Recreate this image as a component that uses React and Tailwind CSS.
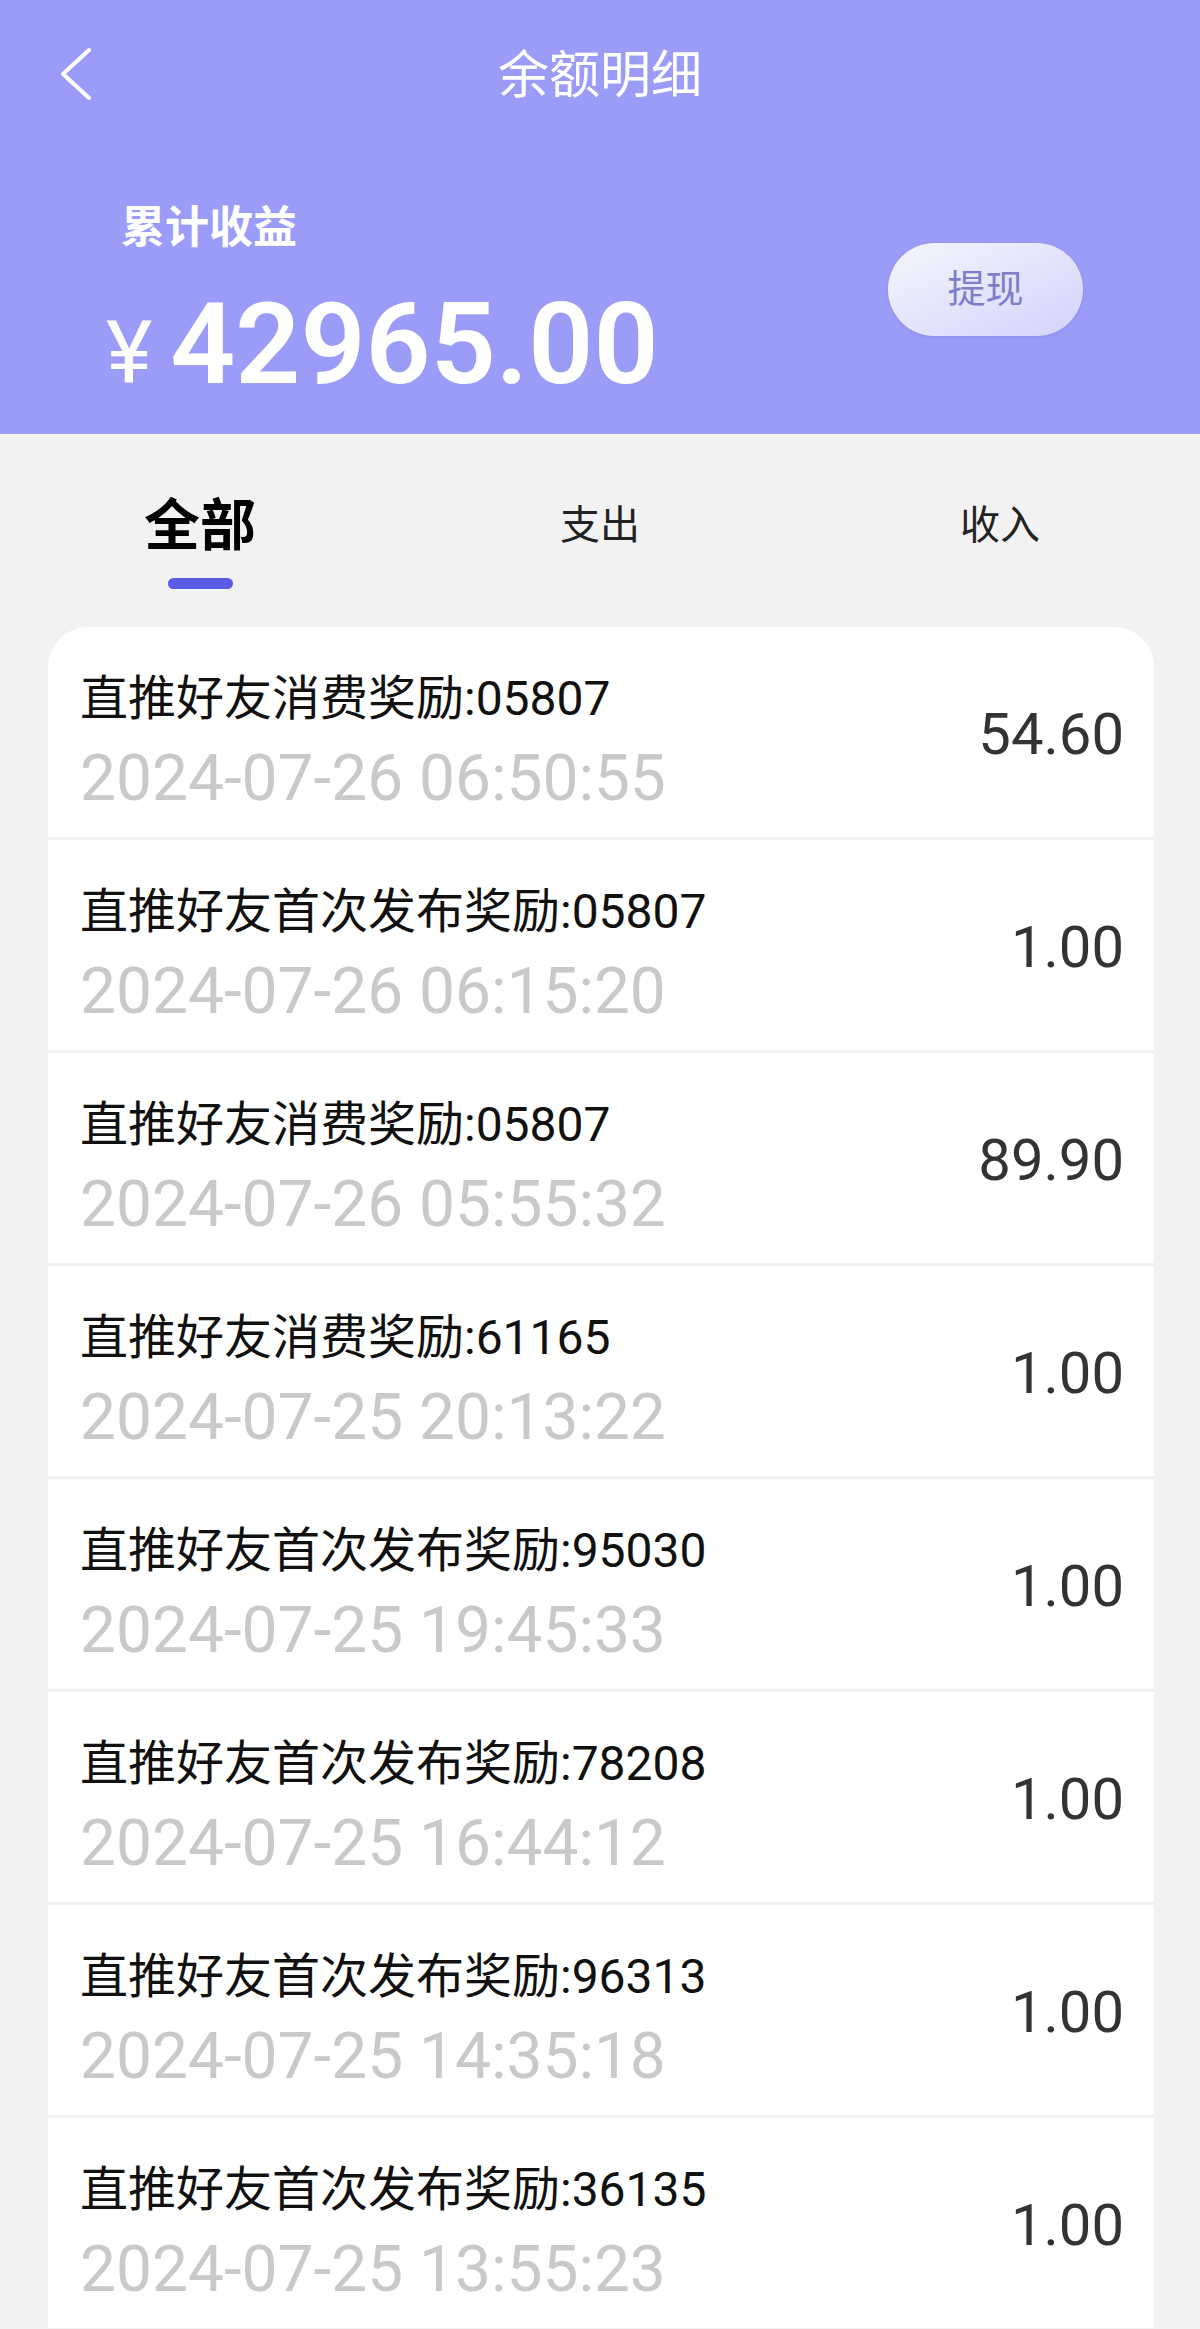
import React from 'react';

const rows = [
  { title: '直推好友消费奖励:05807', time: '2024-07-26 06:50:55', amount: '54.60' },
  { title: '直推好友首次发布奖励:05807', time: '2024-07-26 06:15:20', amount: '1.00' },
  { title: '直推好友消费奖励:05807', time: '2024-07-26 05:55:32', amount: '89.90' },
  { title: '直推好友消费奖励:61165', time: '2024-07-25 20:13:22', amount: '1.00' },
  { title: '直推好友首次发布奖励:95030', time: '2024-07-25 19:45:33', amount: '1.00' },
  { title: '直推好友首次发布奖励:78208', time: '2024-07-25 16:44:12', amount: '1.00' },
  { title: '直推好友首次发布奖励:96313', time: '2024-07-25 14:35:18', amount: '1.00' },
  { title: '直推好友首次发布奖励:36135', time: '2024-07-25 13:55:23', amount: '1.00' },
];

const font = "font-['Roboto','Noto_Sans_CJK_SC',sans-serif]";

const BackIcon = () => (
  <svg width="36" height="56" viewBox="0 0 36 56" fill="none">
    <path d="M29 4 L3 28 L29 52" stroke="white" strokeWidth="4" strokeLinecap="round" strokeLinejoin="round" />
  </svg>
);

const Row = ({ title, time, amount }) => (
  <div className="flex items-center justify-between pl-[32px] pr-[30px] pt-[44px] pb-[26px] border-b-[3px] border-[#f1f1f1]">
    <div className="flex flex-col">
      <div className="text-[48px] leading-[56px] text-[#111] whitespace-nowrap">{title}</div>
      <div className="mt-[20px] text-[64px] leading-[64px] text-[#c9c9c9] whitespace-nowrap">{time}</div>
    </div>
    <div className="mb-[14px] text-[58px] leading-[58px] text-[#333]">{amount}</div>
  </div>
);

export default function App() {
  return (
    <div className={`w-[1200px] h-[2329px] overflow-hidden bg-[#f2f2f2] ${font}`}>
      {/* header */}
      <div className="h-[434px] bg-[#9b9cf8]">
        <div className="grid grid-cols-[1fr_auto_1fr] items-center h-[152px]">
          <div className="pl-[60px] pb-[4px]">
            <BackIcon />
          </div>
          <div className="text-[51px] leading-[60px] text-white">余额明细</div>
          <div />
        </div>
        <div className="flex justify-between mt-[48px] pr-[117px]">
          <div className="flex flex-col pl-[106px]">
            <div className="ml-[15px] text-[44px] leading-[56px] font-bold text-white">累计收益</div>
            <div className="flex items-baseline mt-[30px] text-white">
              <span className="text-[88px] leading-[116px] mr-[18px]">¥</span>
              <span className="text-[114px] leading-[116px] font-semibold">42965.00</span>
            </div>
          </div>
          <button className="mt-[43px] w-[195px] h-[93px] rounded-full bg-gradient-to-br from-[#f6f6fe] to-[#d2d3fa] shadow-[0_1px_3px_rgba(90,90,180,0.25)] text-[38px] text-[#7d7fc6]">
            提现
          </button>
        </div>
      </div>

      {/* tabs */}
      <div className="grid grid-cols-3 h-[193px]">
        <div className="flex flex-col items-center pt-[60px]">
          <div className="text-[56px] leading-[64px] font-bold text-black">全部</div>
          <div className="mt-[20px] w-[65px] h-[11px] rounded-full bg-[#5b5ce6]" />
        </div>
        <div className="flex flex-col items-center pt-[60px]">
          <div className="text-[40px] leading-[64px] text-[#222]">支出</div>
        </div>
        <div className="flex flex-col items-center pt-[60px]">
          <div className="text-[40px] leading-[64px] text-[#222]">收入</div>
        </div>
      </div>

      {/* list */}
      <div className="ml-[48px] mr-[46px] bg-white rounded-t-[40px]">
        {rows.map((r, i) => (
          <Row key={i} {...r} />
        ))}
      </div>
    </div>
  );
}
